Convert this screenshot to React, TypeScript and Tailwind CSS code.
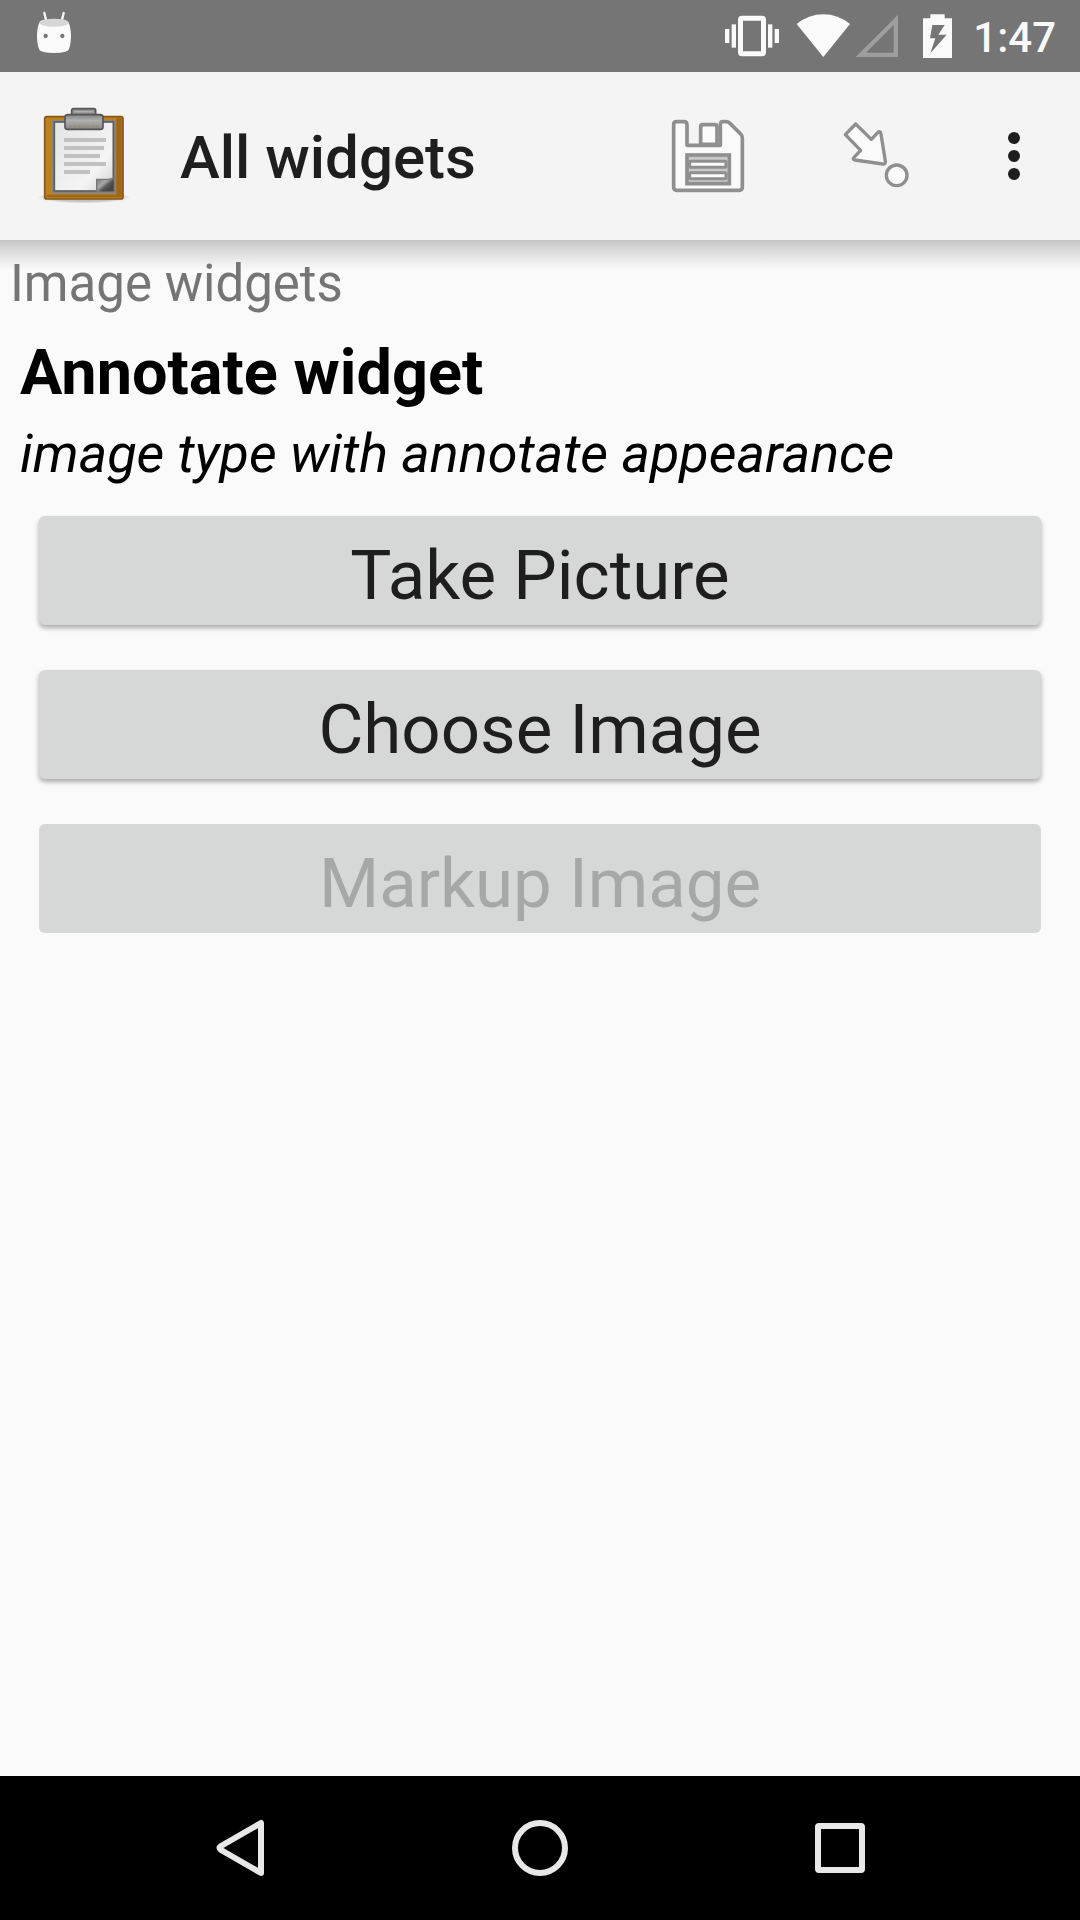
import type { ReactNode } from "react";

interface WidgetButtonProps {
  children: ReactNode;
  disabled?: boolean;
}

const WidgetButton: React.FC<WidgetButtonProps> = ({ children, disabled }) => {
  return (
    <button
      type="button"
      disabled={disabled}
      className="
      h-[109px]
      w-full
      rounded-md
      bg-[#d6d8d7]
      pt-[10px]
      text-[69px]
      leading-[80px]
      text-[#1e1e1e]
      shadow-[0_3px_5px_rgba(0,0,0,0.32)]
      disabled:text-[#a6a8a7]
      disabled:shadow-none
      "
    >
      {children}
    </button>
  );
};

const StatusBar = () => (
  <div className="flex h-[72px] items-center justify-between bg-[#757575] pr-6 pl-[30px]">
    <svg width="48" height="72" viewBox="90 0 144 216" aria-hidden="true">
      <path d="M133 39 L139 64 M191 39 L185 64" stroke="#fafafa" strokeWidth="7" strokeLinecap="round" />
      <path
        d="M118 68 Q111 82 111 108 Q111 134 118 149 Q122 158 162 159 Q202 158 206 149 Q213 134 213 108 Q213 82 206 68 Z"
        fill="#fafafa"
      />
      <ellipse cx="162" cy="68" rx="44" ry="12" fill="#d6d6d6" />
      <circle cx="137" cy="108" r="6.5" fill="#757575" />
      <circle cx="187" cy="108" r="6.5" fill="#757575" />
    </svg>
    <div className="flex items-center">
      <svg className="mr-2" width="64" height="72" viewBox="60 0 192 216" fill="#fafafa" aria-hidden="true">
        <rect x="75" y="87" width="13" height="42" />
        <rect x="95" y="73" width="13" height="70" />
        <rect x="204" y="73" width="13" height="70" />
        <rect x="224" y="87" width="13" height="42" />
        <path
          fillRule="evenodd"
          d="M126 47 H186 Q198 47 198 59 V157 Q198 169 186 169 H126 Q114 169 114 157 V59 Q114 47 126 47 Z M129 62 V154 H183 V62 Z"
        />
      </svg>
      <svg width="60" height="72" viewBox="276 0 180 216" aria-hidden="true">
        <path d="M290 72 Q326 43 370 43 Q414 43 450 72 L370 171 Z" fill="#fafafa" />
      </svg>
      <svg className="mr-5" width="48" height="72" viewBox="456 0 144 216" aria-hidden="true">
        <path fillRule="evenodd" d="M594 44 V171 H467 Z M581 75 L498 158 H581 Z" fill="#9e9e9e" />
      </svg>
      <svg className="mr-[17px]" width="36" height="72" viewBox="660 0 108 216" aria-hidden="true">
        <path d="M691 43 H734 V55 H756 V174 H669 V55 H691 Z" fill="#fafafa" />
        <path d="M697 75 H734 L715 104 H740 L691 160 L706 115 H690 Z" fill="#757575" />
      </svg>
      <time className="pt-1 text-[42px] leading-[48px] font-medium text-[#fafafa]">1:47</time>
    </div>
  </div>
);

const ClipboardIcon = () => (
  <svg width="96" height="108" viewBox="48 36 288 324" aria-hidden="true">
    <defs>
      <linearGradient id="paper" x1="0" y1="0" x2="1" y2="1">
        <stop offset="0" stopColor="#e4e4e4" />
        <stop offset="0.7" stopColor="#f4f4f4" />
        <stop offset="1" stopColor="#d0d0d0" />
      </linearGradient>
      <linearGradient id="clip" x1="0" y1="0" x2="0" y2="1">
        <stop offset="0" stopColor="#848484" />
        <stop offset="0.4" stopColor="#b0b0b0" />
        <stop offset="1" stopColor="#858585" />
      </linearGradient>
      <linearGradient id="curl" x1="0" y1="0" x2="1" y2="1">
        <stop offset="0" stopColor="#777" />
        <stop offset="0.4" stopColor="#a8a8a8" />
        <stop offset="0.6" stopColor="#555" />
        <stop offset="1" stopColor="#444" />
      </linearGradient>
      <radialGradient id="ground">
        <stop offset="0.7" stopColor="#000" stopOpacity="0.2" />
        <stop offset="1" stopColor="#000" stopOpacity="0" />
      </radialGradient>
    </defs>
    <ellipse cx="192" cy="322" rx="140" ry="18" fill="url(#ground)" />
    <rect x="74" y="80" width="235" height="247" rx="7" fill="#be8120" stroke="#865716" strokeWidth="5" />
    <path d="M289 85 H305 V322 H80 V314 H289 Z" fill="#9b671b" />
    <rect x="96" y="90" width="192" height="221" rx="4" fill="#858585" />
    <rect x="103" y="96" width="177" height="207" fill="url(#paper)" stroke="#5e5e5e" strokeWidth="5" />
    <path d="M132 150 H258 M132 174 H252 M132 198 H240 M132 222 H258 M132 246 H210" stroke="#c1c1c1" strokeWidth="12" />
    <path d="M228 266 H264 Q276 266 284 258 V306 H228 Z" fill="#777" />
    <path d="M232 270 H264 Q276 268 281 262 V280 L257 304 H232 Z" fill="url(#curl)" />
    <path d="M281 274 V304 H247 Q270 299 281 274 Z" fill="#454545" />
    <path d="M155 78 V62 Q155 56 161 56 H221 Q227 56 227 62 V78 Z" fill="#929292" stroke="#555" strokeWidth="5" />
    <path d="M164 65 H219" stroke="#b0b0b0" strokeWidth="4" />
    <rect x="135" y="74" width="114" height="44" rx="8" fill="url(#clip)" stroke="#555" strokeWidth="5" />
    <path d="M150 109 H236" stroke="#ad8446" strokeWidth="4" strokeDasharray="5 8" />
  </svg>
);

const SaveIcon = () => (
  <svg width="96" height="96" viewBox="60 54 288 288" fill="#fafafa" stroke="#8f8f8f" strokeWidth="11" aria-hidden="true">
    <path
      d="M110 95 H132 Q141 95 141 104 V166 H241 V104 Q241 95 249 95 H258 Q265 95 270 100 L302 132 Q307 137 307 144 V292 Q307 301 298 301 H110 Q101 301 101 292 V104 Q101 95 110 95 Z"
      strokeLinejoin="round"
    />
    <path d="M182 163 V110 Q182 104 188 104 H225 Q231 104 231 110 V163 Z" />
    <rect x="141" y="195" width="127" height="86" fill="#c8c8c8" />
    <rect x="149" y="214" width="109" height="18" rx="4" strokeWidth="9" />
    <rect x="149" y="248" width="109" height="18" rx="4" strokeWidth="9" />
  </svg>
);

const GoToIcon = () => (
  <svg
    width="96"
    height="96"
    viewBox="24 54 288 288"
    fill="#fafafa"
    stroke="#8f8f8f"
    strokeWidth="10"
    strokeLinejoin="round"
    aria-hidden="true"
  >
    <path d="M107 102 L154 148 L174 127 Q182 122 183 132 L196 214 Q197 224 188 222 L105 210 Q96 208 102 202 L122 181 L76 134 Z" />
    <circle cx="230" cy="256" r="31" />
  </svg>
);

const Toolbar = () => (
  <header className="flex h-[168px] items-center bg-[#f4f4f4] pr-3 pl-9">
    <ClipboardIcon />
    <h1 className="ml-12 flex-1 pt-1 text-[60px] leading-[72px] font-medium text-[#1e1e1e]">All widgets</h1>
    <button type="button" aria-label="Save" className="flex h-full w-[168px] items-center justify-center">
      <SaveIcon />
    </button>
    <button type="button" aria-label="Go to prompt" className="flex h-full w-[168px] items-center justify-center">
      <GoToIcon />
    </button>
    <button type="button" aria-label="More options" className="flex h-full w-[108px] items-center justify-center">
      <svg width="12" height="48" viewBox="0 0 12 48" fill="#1e1e1e" aria-hidden="true">
        <circle cx="6" cy="6" r="6" />
        <circle cx="6" cy="24" r="6" />
        <circle cx="6" cy="42" r="6" />
      </svg>
    </button>
  </header>
);

const NavigationBar = () => (
  <nav className="flex h-36 bg-black px-[90px]">
    <button type="button" aria-label="Back" className="flex flex-1 items-center justify-center">
      <svg width="60" height="60" viewBox="0 0 60 60" fill="none" stroke="#e8e8e8" strokeWidth="6" strokeLinejoin="round" aria-hidden="true">
        <path d="M51 5 V55 L11 32 Q8 30 11 28 Z" />
      </svg>
    </button>
    <button type="button" aria-label="Home" className="flex flex-1 items-center justify-center">
      <svg width="60" height="60" viewBox="0 0 60 60" fill="none" stroke="#e8e8e8" strokeWidth="6" aria-hidden="true">
        <circle cx="30" cy="30" r="25" />
      </svg>
    </button>
    <button type="button" aria-label="Recent apps" className="flex flex-1 items-center justify-center">
      <svg width="60" height="60" viewBox="0 0 60 60" fill="none" stroke="#e8e8e8" strokeWidth="6" aria-hidden="true">
        <rect x="8" y="8" width="44" height="44" rx="1" />
      </svg>
    </button>
  </nav>
);

export default function App() {
  return (
    <div className="flex min-h-screen flex-col bg-[#fafafa] font-['Roboto',sans-serif]">
      <StatusBar />
      <Toolbar />
      <main className="flex-1 bg-[linear-gradient(#c4c5c4,#d9dad9_10px,#fafafa_30px)] pt-[14px]">
        <p className="px-[10px] text-[51px] leading-[60px] text-[#757575]">Image widgets</p>
        <section className="px-5 pt-[23px]">
          <h2 className="text-[63px] leading-[72px] font-bold text-black">Annotate widget</h2>
          <p className="mt-[13px] text-[54px] leading-[64px] text-black italic">image type with annotate appearance</p>
          <div className="mt-[30px] flex flex-col gap-[45px] px-[19px]">
            <WidgetButton>Take Picture</WidgetButton>
            <WidgetButton>Choose Image</WidgetButton>
            <WidgetButton disabled>Markup Image</WidgetButton>
          </div>
        </section>
      </main>
      <NavigationBar />
    </div>
  );
}
